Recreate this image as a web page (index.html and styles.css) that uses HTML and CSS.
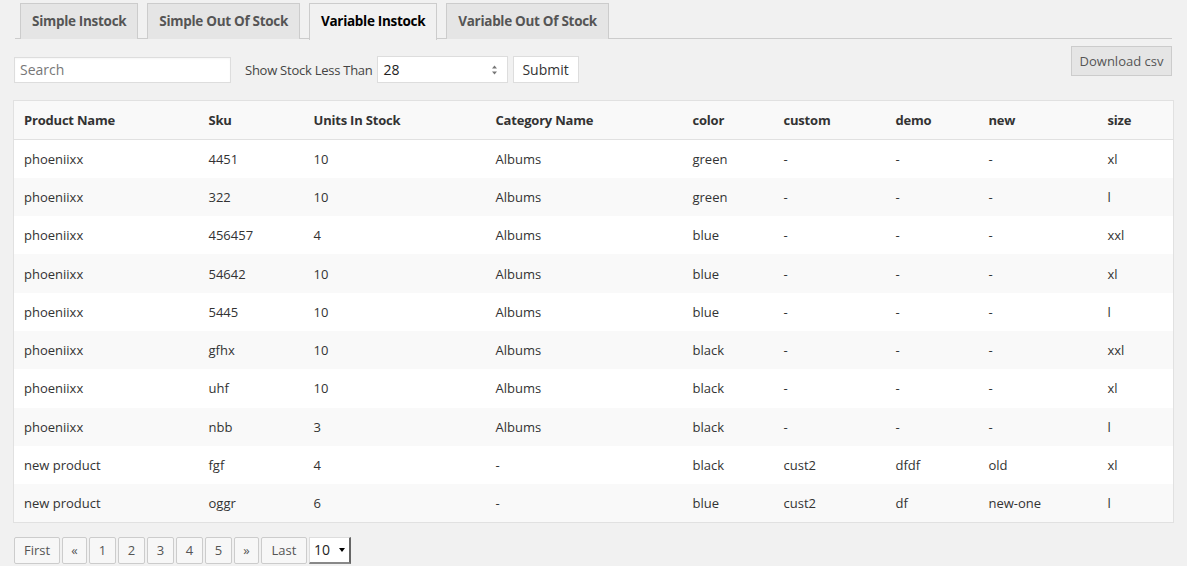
FILE: index.html
```html
<!DOCTYPE html>
<html>
<head>
<meta charset="utf-8">
<link rel="stylesheet" href="styles.css">
</head>
<body>
<div class="wrap">
  <nav class="tabs">
    <a class="tab">Simple Instock</a>
    <a class="tab">Simple Out Of Stock</a>
    <a class="tab active">Variable Instock</a>
    <a class="tab">Variable Out Of Stock</a>
  </nav>
  <div class="toolbar">
    <div class="filters">
      <input class="search" type="text" placeholder="Search">
      <label class="lbl">Show Stock Less Than</label>
      <div class="num"><span>28</span><span class="spin"><svg width="7" height="12" viewBox="0 0 7 12"><path d="M1 4.5 L3.5 1.5 L6 4.5 Z" fill="#777"/><path d="M1 7.5 L3.5 10.5 L6 7.5 Z" fill="#777"/></svg></span></div>
      <button class="btn submit">Submit</button>
    </div>
    <button class="btn dl">Download csv</button>
  </div>
  <table class="grid">
    <thead>
      <tr><th class="c1">Product Name</th><th class="c2">Sku</th><th class="c3">Units In Stock</th><th class="c4">Category Name</th><th class="c5">color</th><th class="c6">custom</th><th class="c7">demo</th><th class="c8">new</th><th>size</th></tr>
    </thead>
    <tbody>
      <tr><td>phoeniixx</td><td>4451</td><td>10</td><td>Albums</td><td>green</td><td>-</td><td>-</td><td>-</td><td>xl</td></tr>
      <tr><td>phoeniixx</td><td>322</td><td>10</td><td>Albums</td><td>green</td><td>-</td><td>-</td><td>-</td><td>l</td></tr>
      <tr><td>phoeniixx</td><td>456457</td><td>4</td><td>Albums</td><td>blue</td><td>-</td><td>-</td><td>-</td><td>xxl</td></tr>
      <tr><td>phoeniixx</td><td>54642</td><td>10</td><td>Albums</td><td>blue</td><td>-</td><td>-</td><td>-</td><td>xl</td></tr>
      <tr><td>phoeniixx</td><td>5445</td><td>10</td><td>Albums</td><td>blue</td><td>-</td><td>-</td><td>-</td><td>l</td></tr>
      <tr><td>phoeniixx</td><td>gfhx</td><td>10</td><td>Albums</td><td>black</td><td>-</td><td>-</td><td>-</td><td>xxl</td></tr>
      <tr><td>phoeniixx</td><td>uhf</td><td>10</td><td>Albums</td><td>black</td><td>-</td><td>-</td><td>-</td><td>xl</td></tr>
      <tr><td>phoeniixx</td><td>nbb</td><td>3</td><td>Albums</td><td>black</td><td>-</td><td>-</td><td>-</td><td>l</td></tr>
      <tr><td>new product</td><td>fgf</td><td>4</td><td>-</td><td>black</td><td>cust2</td><td>dfdf</td><td>old</td><td>xl</td></tr>
      <tr><td>new product</td><td>oggr</td><td>6</td><td>-</td><td>blue</td><td>cust2</td><td>df</td><td>new-one</td><td>l</td></tr>
    </tbody>
  </table>
  <div class="pager">
    <button class="pg w">First</button>
    <button class="pg n">«</button>
    <button class="pg">1</button>
    <button class="pg">2</button>
    <button class="pg">3</button>
    <button class="pg">4</button>
    <button class="pg">5</button>
    <button class="pg n">»</button>
    <button class="pg w">Last</button>
    <div class="sel"><span>10</span><svg width="6" height="4" viewBox="0 0 6 4"><path d="M0 0 H6 L3 4 Z" fill="#000"/></svg></div>
  </div>
</div>
</body>
</html>
```
FILE: styles.css
```css
* { box-sizing: border-box; }
html, body { margin: 0; padding: 0; background: #f1f1f1; }
body { font-family: "Open Sans", "DejaVu Sans", sans-serif; font-size: 13px; color: #444; }
.wrap { padding: 3px 13px 0 13px; width: 1187px; }
.tabs { display: flex; border-bottom: 1px solid #ccc; padding-left: 5px; height: 36px; margin-left: 2px; margin-right: 2px; }
.tab { display: block; height: 36px; padding: 0 11px; line-height: 35px; margin-right: 9px; border: 1px solid #ccc; border-bottom: 0; background: #e5e5e5; color: #555; font-weight: 700; font-size: 13.5px; letter-spacing: -0.3px; }
.tab.active { background: #f1f1f1; color: #000; margin-bottom: -1px; height: 37px; }
.toolbar { display: flex; justify-content: space-between; align-items: flex-start; margin-top: 7px; height: 54px; }
.filters { display: flex; align-items: center; margin-top: 10px; }
.search { width: 217px; height: 26px; margin-left: 1px; border: 1px solid #ddd; background: #fff; font: 14px "Open Sans", sans-serif; padding: 0 5px; color: #333; box-shadow: inset 0 1px 2px rgba(0,0,0,.04); }
.search::placeholder { color: #777; }
.lbl { margin-left: 14px; font-size: 13px; color: #444; letter-spacing: -0.25px; }
.num { margin-left: 4px; width: 131px; height: 27px; background: #fff; border: 1px solid #ddd; display: flex; align-items: center; justify-content: space-between; padding: 0 9px 0 6px; font-size: 14px; color: #222; }
.spin { display: flex; }
.btn { font-family: "Open Sans", sans-serif; cursor: pointer; }
.submit { margin-left: 5px; height: 27px; width: 66px; background: #fff; border: 1px solid #ddd; font-size: 14px; color: #333; padding: 0; }
.dl { height: 30px; width: 101px; margin-right: 2px; margin-top: 0; background: #e5e5e5; border: 1px solid #ccc; color: #555; font-size: 13px; padding: 0; }
.grid { width: 1161px; border-collapse: collapse; border: 1px solid #e1e1e1; background: #fff; table-layout: fixed; }
.grid th, .grid td { text-align: left; padding: 0 10px; white-space: nowrap; }
.grid th { height: 39px; font-weight: 700; color: #333; background: #f9f9f9; border-bottom: 1px solid #e1e1e1; font-size: 13px; letter-spacing: -0.2px; }
.grid td { height: 38.3px; color: #333; }
.grid tbody tr:nth-child(even) { background: #f9f9f9; }
.c1 { width: 185px; } .c2 { width: 105px; } .c3 { width: 182px; } .c4 { width: 197px; } .c5 { width: 91px; } .c6 { width: 112px; } .c7 { width: 93px; } .c8 { width: 119px; }
.pager { display: flex; gap: 2px; margin-top: 14px; margin-left: 1px; }
.pg { height: 27px; width: 27px; background: #f7f7f7; border: 1px solid #ccc; border-radius: 2px; font: 13px "Open Sans", sans-serif; color: #555; padding: 0; }
.pg.w { width: 46px; }
.pg.n { width: 25px; }
.sel { width: 42px; height: 27px; background: #fff; border: 1px solid #ddd; border-right: 2px solid #666; border-bottom: 2px solid #888; display: flex; align-items: center; justify-content: space-between; padding: 0 4px 0 4px; font-size: 14px; color: #222; }
```
